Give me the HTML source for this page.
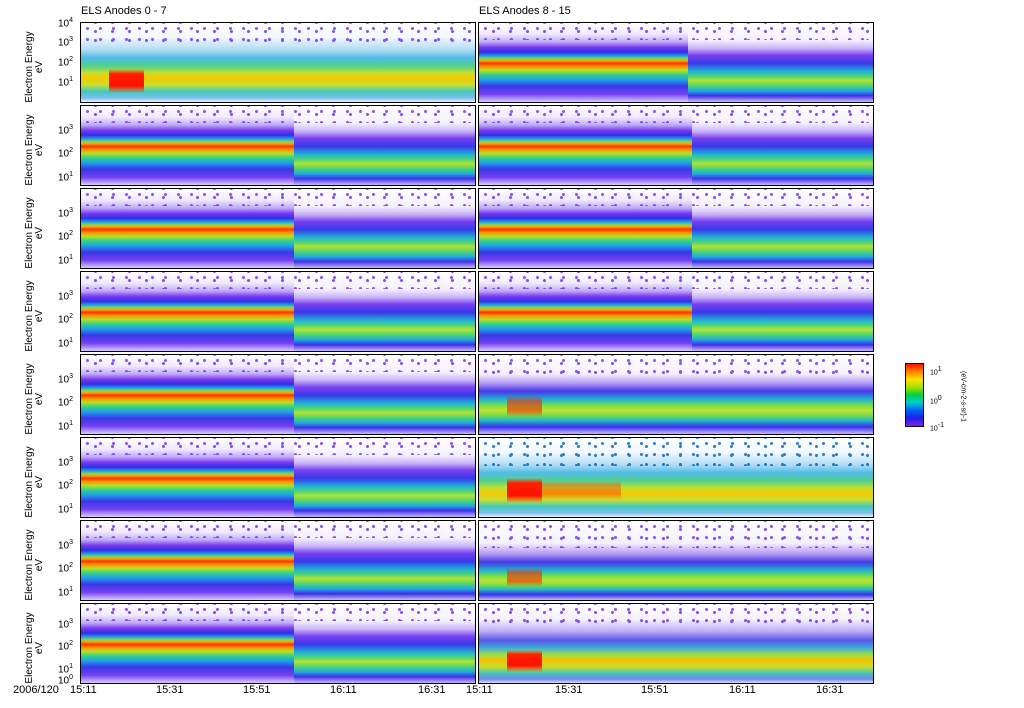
<!DOCTYPE html>
<html><head><meta charset="utf-8"><style>
body{margin:0;width:1024px;height:708px;background:#fff;position:relative;overflow:hidden;font-family:"Liberation Sans",sans-serif;color:#000}
.p{position:absolute;width:394px;height:79px;border:1px solid #000;overflow:hidden;background:#fff}
.p div{position:absolute;top:0;height:100%}
.e{left:0;width:54%;background:linear-gradient(to bottom,#fff 0%,#f0eafe 14%,#c0aaf8 24%,#7838f0 31%,#3030e8 37%,#20a8e0 42%,#80d850 45%,#ffa000 48%,#ff3000 51%,#ff9000 55%,#b8e020 60%,#30d090 66%,#20a0e8 72%,#3838e8 80%,#7440f0 90%,#d8ccfc 100%)}
.l{left:54%;width:46%;background:linear-gradient(to bottom,#fff 0%,#f4f0fe 22%,#c8b4f8 32%,#7840f0 41%,#3838e8 51%,#20b0d8 61%,#50d870 68%,#b8e030 73%,#50d870 79%,#20a8e0 86%,#4030e8 92%,#c8b8f8 100%)}
.k{background:linear-gradient(to bottom,rgba(255,32,0,0) 0%,#ff2000 20%,#ff1000 70%,rgba(255,100,0,0) 100%)}
.A{left:0;width:100%;background:linear-gradient(to bottom,#fff 0%,#f2f8fe 18%,#b0dcf4 34%,#50bce8 44%,#50d090 54%,#c0e030 63%,#f8c800 70%,#c8e030 78%,#40c8c0 87%,#80c0ec 95%,#e8f4fe 100%)}
.B{left:0;width:100%;background:linear-gradient(to bottom,#fff 0%,#f4f0fe 24%,#b098f4 36%,#4838e8 46%,#20b0d0 56%,#78e048 64%,#c0e030 70%,#78e048 76%,#20b8c8 83%,#3830e8 91%,#c8b8fa 100%)}
.d{left:0;width:100%;background-image:radial-gradient(circle,#7030f0 1.3px,transparent 1.8px),radial-gradient(circle,#6a28f0 1.3px,transparent 1.8px);background-size:13px 11px,17px 9px;background-position:0 0,6px 4px;opacity:.8}
.t{position:absolute;font-size:11px;white-space:nowrap}
.yl{position:absolute;font-size:10px;transform:rotate(-90deg);transform-origin:center;text-align:center;width:80px;line-height:10px}
.tk{position:absolute;font-size:10px}
.ts{position:absolute;left:58px;font-size:10px;line-height:20px}
sup{font-size:7px}
</style></head><body>
<div class="t" style="left:81px;top:5px">ELS Anodes 0 - 7</div>
<div class="t" style="left:479px;top:5px">ELS Anodes 8 - 15</div>

<div class="p" style="left:80px;top:22px"><div class="A"></div><div class="k" style="left:7%;width:9%;top:58%;height:30%"></div><div class="d" style="height:30%"></div></div>
<div class="p" style="left:80px;top:105px"><div class="e"></div><div class="l"></div><div class="d" style="height:22%"></div></div>
<div class="p" style="left:80px;top:188px"><div class="e"></div><div class="l"></div><div class="d" style="height:22%"></div></div>
<div class="p" style="left:80px;top:271px"><div class="e"></div><div class="l"></div><div class="d" style="height:22%"></div></div>
<div class="p" style="left:80px;top:354px"><div class="e"></div><div class="l"></div><div class="d" style="height:22%"></div></div>
<div class="p" style="left:80px;top:437px"><div class="e"></div><div class="l"></div><div class="d" style="height:22%"></div></div>
<div class="p" style="left:80px;top:520px"><div class="e"></div><div class="l"></div><div class="d" style="height:22%"></div></div>
<div class="p" style="left:80px;top:603px"><div class="e"></div><div class="l"></div><div class="d" style="height:22%"></div></div>

<div class="p" style="left:478px;top:22px"><div class="e" style="width:53%"></div><div class="l" style="left:53%;width:47%"></div><div class="d" style="height:22%"></div></div>
<div class="p" style="left:478px;top:105px"><div class="e"></div><div class="l"></div><div class="d" style="height:22%"></div></div>
<div class="p" style="left:478px;top:188px"><div class="e"></div><div class="l"></div><div class="d" style="height:22%"></div></div>
<div class="p" style="left:478px;top:271px"><div class="e"></div><div class="l"></div><div class="d" style="height:22%"></div></div>
<div class="p" style="left:478px;top:354px"><div class="B"></div><div class="k" style="left:7%;width:9%;top:52%;height:26%;opacity:.55"></div><div class="d" style="height:30%"></div></div>
<div class="p" style="left:478px;top:437px"><div class="A"></div><div class="k" style="left:7%;width:9%;top:50%;height:32%"></div><div class="k" style="left:16%;width:20%;top:55%;height:24%;opacity:.35"></div><div class="d" style="height:35%;filter:hue-rotate(-60deg)"></div></div>
<div class="p" style="left:478px;top:520px"><div class="B" style="background:linear-gradient(to bottom,#fff 0%,#f4f0fe 28%,#b098f4 42%,#4838e8 52%,#20b0d0 62%,#78e048 70%,#c0e030 75%,#78e048 81%,#20b8c8 87%,#3830e8 93%,#c8b8fa 100%)"></div><div class="k" style="left:7%;width:9%;top:60%;height:24%;opacity:.55"></div><div class="d" style="height:34%"></div></div>
<div class="p" style="left:478px;top:603px"><div class="A" style="background:linear-gradient(to bottom,#fff 0%,#f4f0fe 20%,#c0b0f6 34%,#5858e8 46%,#40b0d8 56%,#a0e040 64%,#f8c000 72%,#c0e030 80%,#40c0c0 88%,#7088e8 95%,#e0d8fc 100%)"></div><div class="k" style="left:7%;width:9%;top:58%;height:28%"></div><div class="d" style="height:30%"></div></div>

<div class="yl" style="left:-5px;top:57px">Electron Energy<br>eV</div>
<div class="yl" style="left:-5px;top:140px">Electron Energy<br>eV</div>
<div class="yl" style="left:-5px;top:223px">Electron Energy<br>eV</div>
<div class="yl" style="left:-5px;top:306px">Electron Energy<br>eV</div>
<div class="yl" style="left:-5px;top:389px">Electron Energy<br>eV</div>
<div class="yl" style="left:-5px;top:472px">Electron Energy<br>eV</div>
<div class="yl" style="left:-5px;top:555px">Electron Energy<br>eV</div>
<div class="yl" style="left:-5px;top:638px">Electron Energy<br>eV</div>

<div class="tk" style="left:58px;top:17px">10<sup>4</sup></div>
<div class="tk" style="left:58px;top:36px">10<sup>3</sup></div>
<div class="tk" style="left:58px;top:56px">10<sup>2</sup></div>
<div class="tk" style="left:58px;top:76px">10<sup>1</sup></div>
<div class="ts" style="top:118px">10<sup>3</sup><br>10<sup>2</sup><br>10<sup>1</sup></div>
<div class="ts" style="top:201px">10<sup>3</sup><br>10<sup>2</sup><br>10<sup>1</sup></div>
<div class="ts" style="top:284px">10<sup>3</sup><br>10<sup>2</sup><br>10<sup>1</sup></div>
<div class="ts" style="top:367px">10<sup>3</sup><br>10<sup>2</sup><br>10<sup>1</sup></div>
<div class="ts" style="top:450px">10<sup>3</sup><br>10<sup>2</sup><br>10<sup>1</sup></div>
<div class="ts" style="top:533px">10<sup>3</sup><br>10<sup>2</sup><br>10<sup>1</sup></div>
<div class="ts" style="top:612px;line-height:19px">10<sup>3</sup><br>10<sup>2</sup><br>10<sup>1</sup></div>
<div class="tk" style="left:58px;top:674px">10<sup>0</sup></div>

<div class="t" style="left:13px;top:684px">2006/120</div>
<div class="t" style="left:70px;top:684px">15:11</div>
<div class="t" style="left:156px;top:684px">15:31</div>
<div class="t" style="left:243px;top:684px">15:51</div>
<div class="t" style="left:330px;top:684px">16:11</div>
<div class="t" style="left:418px;top:684px">16:31</div>
<div class="t" style="left:466px;top:684px">15:11</div>
<div class="t" style="left:555px;top:684px">15:31</div>
<div class="t" style="left:641px;top:684px">15:51</div>
<div class="t" style="left:729px;top:684px">16:11</div>
<div class="t" style="left:816px;top:684px">16:31</div>

<div style="position:absolute;left:905px;top:363px;width:17px;height:62px;border:1px solid #000;background:linear-gradient(to bottom,#ff1000 0%,#ff8000 12%,#ffe000 25%,#a0e000 38%,#00d040 50%,#00d0d0 62%,#0060f0 75%,#2020e8 87%,#8020f0 100%)"></div>
<div style="position:absolute;left:930px;top:366px;font-size:7px">10<sup>1</sup></div>
<div style="position:absolute;left:930px;top:395px;font-size:7px">10<sup>0</sup></div>
<div style="position:absolute;left:930px;top:422px;font-size:7px">10<sup>-1</sup></div>
<div style="position:absolute;left:918px;top:393px;width:90px;text-align:center;font-size:7px;transform:rotate(90deg);white-space:nowrap">(eV-cm-2-s-sr)-1</div>
</body></html>
